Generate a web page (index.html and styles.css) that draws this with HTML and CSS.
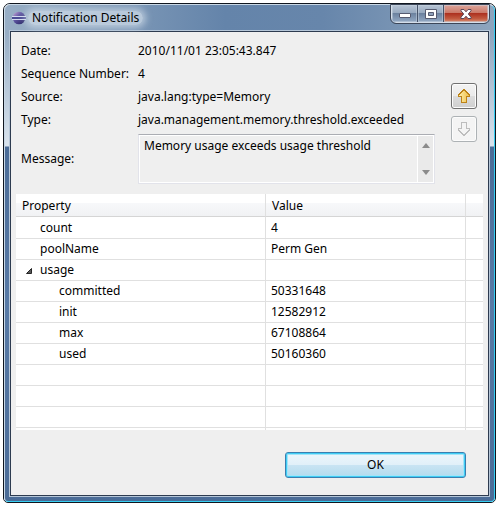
FILE: index.html
```html
<!DOCTYPE html>
<html lang="en">
<head>
<meta charset="utf-8">
<title>Notification Details</title>
<link rel="stylesheet" href="styles.css">
</head>
<body>
<div class="window" role="dialog" aria-labelledby="title">
  <div class="frame">
    <header class="titlebar">
      <svg class="logo" viewBox="0 0 16 16" aria-hidden="true">
        <defs>
          <linearGradient id="ball" x1="0" y1="0" x2="1" y2="1">
            <stop offset="0" stop-color="#d3aedb"/>
            <stop offset="0.4" stop-color="#6259a5"/>
            <stop offset="1" stop-color="#1b1a58"/>
          </linearGradient>
        </defs>
        <circle cx="8" cy="8" r="6.3" fill="url(#ball)"/>
        <path d="M1 6.5h14M1 9.5h14" stroke="#d5dcf0" stroke-width="1"/>
        <path d="M1 8h14" stroke="#4a4b94" stroke-width="2"/>
      </svg>
      <h1 class="title" id="title">Notification Details</h1>
      <div class="controls">
        <button class="control minimize" aria-label="Minimize">
          <svg viewBox="0 0 12 10"><rect x="0.5" y="4.5" width="11" height="4" rx="0.5" fill="#fff" stroke="#565b70"/></svg>
        </button>
        <button class="control maximize" aria-label="Maximize">
          <svg viewBox="0 0 12 10"><path d="M.5.5h11v9H.5z" fill="#fff" stroke="#565b70"/><path d="M3.500 3.500h5v3h-5z" fill="#8fa1bb" stroke="#565b70"/></svg>
        </button>
        <button class="control close" aria-label="Close">
          <svg viewBox="0 0 12 10"><path d="M1 .5h3L6 2.800 8 .5h3v1.300L8.300 5l2.700 3.200v1.300H8L6 7.200 4 9.500H1V8.200L3.700 5 1 1.800z" fill="#fff" stroke="#5d4858"/></svg>
        </button>
      </div>
    </header>
    <main class="content">
      <section class="details">
        <dl class="fields">
          <dt>Date:</dt><dd>2010/11/01 23:05:43.847</dd>
          <dt>Sequence Number:</dt><dd>4</dd>
          <dt>Source:</dt><dd>java.lang:type=Memory</dd>
          <dt>Type:</dt><dd>java.management.memory.threshold.exceeded</dd>
          <dt><label for="message">Message:</label></dt>
          <dd class="message">
            <textarea id="message" readonly>Memory usage exceeds usage threshold</textarea>
            <div class="scroll" aria-hidden="true">
              <svg viewBox="0 0 8 5"><path d="M0 5 4 0l4 5z" fill="#8b8b8b"/></svg>
              <svg viewBox="0 0 8 5"><path d="M0 0h8L4 5z" fill="#8b8b8b"/></svg>
            </div>
          </dd>
        </dl>
        <div class="arrows">
          <button class="arrow" aria-label="Previous">
            <svg viewBox="0 0 14 16" shape-rendering="crispEdges">
              <defs><linearGradient id="gold" x2="1"><stop stop-color="#fff0ae"/><stop offset="1" stop-color="#efbe48"/></linearGradient></defs>
              <path d="M6.500 1.500h1v1h1v1h1v1h1v1h1v1h1v2h-3v6h-5v-6h-3v-2h1v-1h1v-1h1v-1h1v-1h1z" fill="url(#gold)" stroke="#bd8318"/>
            </svg>
          </button>
          <button class="arrow" aria-label="Next" disabled>
            <svg viewBox="0 0 14 16" shape-rendering="crispEdges">
              <path d="M6.500 14.500h1v-1h1v-1h1v-1h1v-1h1v-1h1v-2h-3v-6h-5v6h-3v2h1v1h1v1h1v1h1v1h1z" fill="#f4f4f4" stroke="#bdbdbd"/>
            </svg>
          </button>
        </div>
      </section>
      <table class="tree">
        <colgroup><col class="property"><col class="value"><col></colgroup>
        <thead><tr><th>Property</th><th>Value</th><td></td></tr></thead>
        <tbody>
          <tr><td class="item">count</td><td>4</td><td></td></tr>
          <tr><td class="item">poolName</td><td>Perm Gen</td><td></td></tr>
          <tr><td class="parent"><svg viewBox="0 0 6 6" aria-hidden="true"><path d="M.5 5.500 5.500.5v5z" fill="#595959" stroke="#262626"/></svg>usage</td><td></td><td></td></tr>
          <tr><td class="child">committed</td><td>50331648</td><td></td></tr>
          <tr><td class="child">init</td><td>12582912</td><td></td></tr>
          <tr><td class="child">max</td><td>67108864</td><td></td></tr>
          <tr><td class="child">used</td><td>50160360</td><td></td></tr>
          <tr><td></td><td></td><td></td></tr>
          <tr><td></td><td></td><td></td></tr>
          <tr><td></td><td></td><td></td></tr>
          <tr class="rest"><td></td><td></td><td></td></tr>
        </tbody>
      </table>
      <footer class="actions"><button class="ok">OK</button></footer>
    </main>
  </div>
</div>
</body>
</html>
```
FILE: styles.css
```css
* { box-sizing: border-box; }

body {
  margin: 0;
  padding: 3px;
  background: #fff;
  color: #000;
  font: 12px/20px "Noto Sans", sans-serif;
}

button, textarea { font: inherit; color: inherit; }
svg { display: block; }

.window {
  border: 1px solid #10161f;
  border-radius: 7px 7px 5px 5px;
  overflow: hidden;
}

.frame {
  padding: 0 5px 5px;
  border: 1px solid #c9d8e6;
  border-right-color: #35cdf2;
  border-bottom-color: #35cdf2;
  border-radius: 6px 6px 4px 4px;
  background:
    linear-gradient(#7592b500 28px, #d9e3ed 140px, #d9e3ed 141px, #4b6c97 142px, #587aa6 300px, #4b6c97) no-repeat,
    linear-gradient(90deg, #98aec5, #6484aa 45%, #6786ab 65%, #8ea5be);
}

.titlebar {
  display: flex;
  align-items: center;
  height: 26px;
  padding-left: 1px;
}

.logo { width: 16px; height: 16px; }

.title {
  margin: 0 auto 0 1px;
  padding: 0 4px;
  border-radius: 8px;
  background: #d3dfebb0;
  box-shadow: 0 0 7px 3px #d3dfebb0;
  font-size: 12px;
  line-height: 14px;
  font-weight: 400;
}

.controls {
  display: flex;
  align-self: flex-start;
  height: 18px;
  border: 1px solid #d4deea;
  border-top: 0;
  border-radius: 0 0 5px 5px;
  outline: 1px solid #3c4658;
  overflow: hidden;
}

.control {
  display: grid;
  place-items: center;
  width: 26px;
  padding: 0;
  border: 0;
  border-right: 1px solid #46536a;
  background: linear-gradient(#b7c4d4, #96a8bf 48%, #6c829f 50%, #93a9c4);
  box-shadow: inset 0 0 0 1px #c8d3e080;
}

.control svg { width: 12px; height: 10px; }

.close {
  width: 44px;
  border-right: 0;
  background: linear-gradient(#dda59b, #ca7766 48%, #ad3120 50%, #c25a40 80%, #d78c70);
}

.content {
  border: 1px solid #2d3b50;
  outline: 1px solid #b5c6d8;
  background: #efefef;
  padding: 0 5px 17px;
}

.details {
  display: flex;
  justify-content: space-between;
  padding: 9px 6px 10px 5px;
}

.fields {
  display: grid;
  grid-template-columns: 114px 1fr;
  gap: 3px;
  flex: 1;
  max-width: 414px;
  margin: 0;
  align-items: center;
}

.fields dt { white-space: nowrap; }
.fields dd { margin: 0; }

.fields .message {
  display: flex;
  height: 50px;
  margin-top: 1px;
  border: 1px solid #e2e3ea;
  border-top-color: #abadb3;
  padding: 1px;
  box-shadow: inset 0 0 0 1px #fff;
}

.message textarea {
  flex: 1;
  min-width: 0;
  border: 0;
  padding: 0 4px;
  background: none;
  resize: none;
  outline: 0;
  overflow: hidden;
}

.scroll {
  display: flex;
  flex-direction: column;
  justify-content: space-between;
  align-items: center;
  width: 16px;
  padding: 7px 0;
  border-left: 1px solid #fff;
  background: #eaeaea;
}

.scroll svg { width: 8px; height: 5px; }

.arrows {
  display: grid;
  gap: 7px;
  align-content: start;
  padding-top: 42px;
}

.arrow {
  display: grid;
  place-items: center;
  width: 26px;
  height: 26px;
  padding: 0;
  border: 1px solid #707070;
  border-radius: 3px;
  background: linear-gradient(#f2f2f2, #ebebeb 48%, #dddddd 50%, #cfcfcf);
  box-shadow: inset 0 0 0 1px #fcfcfc;
}

.arrow:disabled { border-color: #adb2b5; background: #f4f4f4; }
.arrow svg { width: 14px; height: 16px; }

.tree {
  width: 100%;
  table-layout: fixed;
  border-collapse: separate;
  border-spacing: 0;
  background: #fff;
}

.property { width: 250px; }
.value { width: 200px; }

.tree th, .tree td {
  height: 21px;
  padding: 0 6px;
  border: 0 solid #e0e0e0;
  border-right-width: 1px;
  border-bottom-width: 1px;
  font-weight: 400;
  text-align: left;
  white-space: nowrap;
}

.tree tbody td { padding-left: 5px; }

.tree thead th, .tree thead td {
  height: 23px;
  padding-top: 2px;
  border-bottom-color: #d5d5d5;
  background: linear-gradient(#fff 9px, #f7f8fa 9px, #f1f2f4);
}

.tree tbody tr:first-child td { height: 22px; }
.tree tr > :last-child { border-right-width: 0; }
.tree tbody .item { padding-left: 24px; }
.tree tbody .child { padding-left: 43px; }
.tree tbody .parent { padding-left: 10px; }
.parent svg { display: inline-block; width: 6px; height: 6px; margin-right: 8px; }
.tree .rest td { height: 2px; padding: 0; border-bottom-width: 0; }

.actions {
  display: flex;
  justify-content: flex-end;
  padding: 22px 17px 0 0;
}

.ok {
  width: 181px;
  height: 26px;
  padding: 0;
  border: 1px solid #3a7fb0;
  border-radius: 3px;
  background: linear-gradient(#eef6fb, #e1f0f9 48%, #c9e4f3 50%, #b2dbee);
  box-shadow: inset 0 0 0 1px #3fcdf5, inset 0 0 0 2px #a4e4f8;
}
```
